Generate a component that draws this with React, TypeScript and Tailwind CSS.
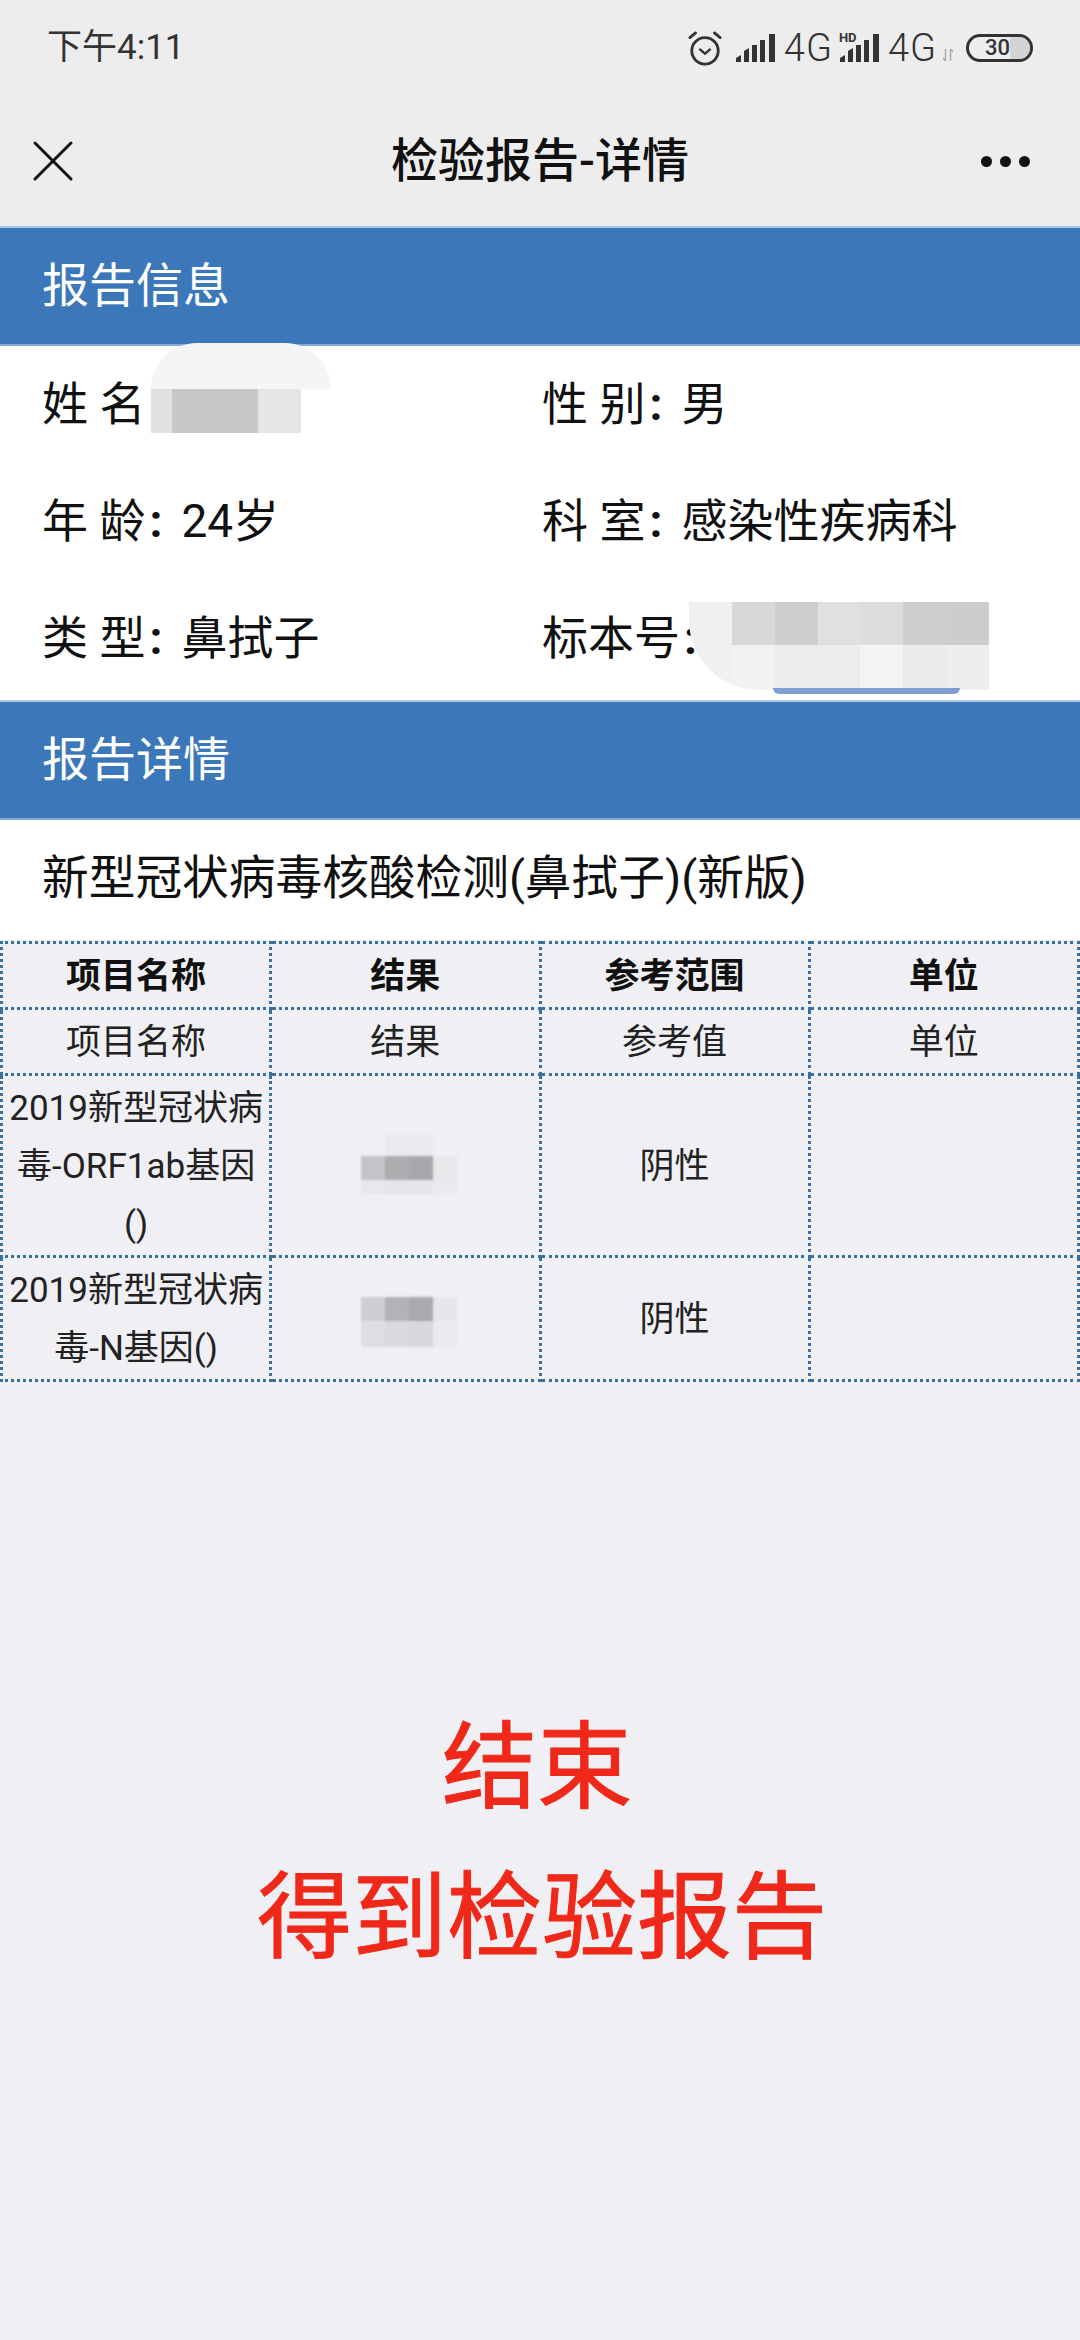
import { X } from 'lucide-react';

const SignalBars = () => (
  <svg width="40" height="28" viewBox="0 0 40 28" fill="#333">
    <path d="M0 28v-4l5-3v7zM8 28V17l5-3v14zM16 28V11h5v17zM24 28V6h5v22zM33 28V0h6v28z" />
  </svg>
);

const Alarm = () => (
  <svg width="34" height="36" viewBox="0 0 36 38" fill="none" stroke="#333" strokeWidth="3">
    <circle cx="18" cy="22" r="14" />
    <path d="M12 20l6 5 6-5" strokeWidth="2.5" />
    <path d="M2 8l6-5M34 8l-6-5" strokeLinecap="round" />
  </svg>
);

const Mosaic = ({ cols, rows, colors }: { cols: string; rows: string; colors: string[] }) => (
  <div className="grid" style={{ gridTemplateColumns: cols, gridTemplateRows: rows }}>
    {colors.map((c, i) => (
      <div key={i} style={{ backgroundColor: c }} />
    ))}
  </div>
);

const SectionBar = ({ title }: { title: string }) => (
  <div className="h-[120px] bg-[#3c78b9] border-t-2 border-b-2 border-t-[#a9c6e2] border-b-[#85abd4] flex items-center pl-[42px] text-[47px] text-white">
    {title}
  </div>
);

const Info = ({ label, value }: { label: string; value?: string }) => (
  <span>
    {label}
    <span className="ml-[4px] mr-[19px] font-bold">:</span>
    {value}
  </span>
);

const cell = 'border-[3px] border-dotted border-[#3a6f9f] text-center align-middle text-[35px] leading-[58px] px-1 pt-[4px] pb-[1px] text-[#222]';
const headCell = 'border-[3px] border-dotted border-[#3a6f9f] text-center align-middle text-[35px] leading-[58px] px-1 pt-[4px] pb-[1px] font-bold text-[#111]';

export default function App() {
  return (
    <div className="min-h-[2340px] bg-[#efeff4] font-['Roboto','Noto_Sans_CJK_SC',sans-serif]">
      <div className="h-[226px] bg-[#ededed]">
        <div className="h-[96px] flex items-center justify-between pl-[47px] pr-[47px]">
          <span className="text-[35px] text-[#333]">下午4:11</span>
          <div className="flex items-center text-[#333]">
            <Alarm />
            <div className="ml-[14px]"><SignalBars /></div>
            <span className="ml-[8px] text-[38px] tracking-[1px] font-light leading-none">4G</span>
            <div className="relative ml-[7px]">
              <SignalBars />
              <span className="absolute -top-[3px] -left-[1px] text-[13px] font-bold leading-none">HD</span>
            </div>
            <span className="ml-[8px] text-[38px] tracking-[1px] font-light leading-none">4G</span>
            <svg className="ml-[5px] mt-[14px]" width="12" height="12" viewBox="0 0 12 12" fill="none" stroke="#aaa" strokeWidth="1.5">
              <path d="M3.5 0v12M1 9l2.5 3M8.5 12V0M11 3L8.5 0" />
            </svg>
            <div className="relative ml-[12px] w-[67px] h-[28px] rounded-full border-[3px] border-[#333] flex items-center justify-center overflow-hidden">
              <div className="absolute right-0 top-0 bottom-0 w-[20px] bg-[#d4d4d4]" />
              <span className="relative text-[22px] font-medium leading-none -ml-[4px]">30</span>
            </div>
          </div>
        </div>
        <div className="h-[130px] grid grid-cols-[1fr_auto_1fr] items-center px-[17px]">
          <X size={72} strokeWidth={3} color="#111" absoluteStrokeWidth />
          <span className="text-[47px] font-medium text-[#111]">检验报告-详情</span>
          <div className="flex gap-[8px] justify-self-end mr-[33px]">
            <div className="w-[11px] h-[11px] rounded-full bg-[#111]" />
            <div className="w-[11px] h-[11px] rounded-full bg-[#111]" />
            <div className="w-[11px] h-[11px] rounded-full bg-[#111]" />
          </div>
        </div>
      </div>

      <SectionBar title="报告信息" />

      <div className="relative bg-white h-[354px] pb-[3px] grid grid-cols-[500px_1fr] grid-rows-3 items-center pl-[42px] text-[46px] text-[#111]">
        <Info label="姓 名" />
        <Info label="性 别" value="男" />
        <Info label="年 龄" value="24岁" />
        <Info label="科 室" value="感染性疾病科" />
        <Info label="类 型" value="鼻拭子" />
        <Info label="标本号" />

        <div className="absolute left-[151px] top-[-3px] w-[180px] h-[46px] bg-[#f4f5f6] rounded-t-[60px]" />
        <div className="absolute left-[151px] top-[43px] w-[150px] h-[44px]">
          <Mosaic cols="21px 86px 43px" rows="44px" colors={['#e2e2e2', '#c8c8c8', '#e5e5e5']} />
        </div>
        <div className="absolute left-[689px] top-[256px] w-[300px] h-[88px] rounded-bl-[70px] overflow-hidden">
          <Mosaic
            cols="repeat(7, 1fr)"
            rows="43px 45px"
            colors={['#f0f0f0', '#d8d8d8', '#cfcfcf', '#e0e0e0', '#dcdcdc', '#cfcfcf', '#cdcdcd', '#f0f0f0', '#f2f2f2', '#ececec', '#ececec', '#f4f4f4', '#ebebeb', '#eeeeee']}
          />
        </div>
        <div className="absolute left-[773px] top-[342px] w-[187px] h-[6px] bg-[#7f9fd0] rounded-b-[6px]" />
      </div>

      <SectionBar title="报告详情" />

      <div className="h-[120px] pb-[3px] bg-white flex items-center pl-[42px] text-[46.7px] text-[#111]">
        新型冠状病毒核酸检测(鼻拭子)(新版)
      </div>

      <table className="w-full table-fixed border-collapse mt-[1px]">
        <tbody>
          <tr>
            <td className={headCell}>项目名称</td>
            <td className={headCell}>结果</td>
            <td className={headCell}>参考范围</td>
            <td className={headCell}>单位</td>
          </tr>
          <tr>
            <td className={cell}>项目名称</td>
            <td className={cell}>结果</td>
            <td className={cell}>参考值</td>
            <td className={cell}>单位</td>
          </tr>
          <tr>
            <td className={cell}>2019新型冠状病毒-ORF1ab基因()</td>
            <td className={cell}>
              <div className="w-[96px] ml-[85px] -mt-[6px] blur-[1px]">
                <Mosaic
                  cols="repeat(4, 24px)"
                  rows="22px 24px 14px"
                  colors={['#efeff4', '#e9e9ee', '#e9e9ee', '#efeff4', '#c4c4c8', '#adadb0', '#a8a8ac', '#e8e8ea', '#e8e8ec', '#e6e6ea', '#e6e6ea', '#eaeaee']}
                />
              </div>
            </td>
            <td className={cell}>阴性</td>
            <td className={cell}></td>
          </tr>
          <tr>
            <td className={cell}>2019新型冠状病毒-N基因()</td>
            <td className={cell}>
              <div className="w-[96px] ml-[85px] mt-[4px] blur-[1px]">
                <Mosaic
                  cols="repeat(4, 24px)"
                  rows="24px 26px"
                  colors={['#cfcfd3', '#b3b3b7', '#aaaaae', '#e6e6ea', '#dedee2', '#dadade', '#d8d8dc', '#eaeaee']}
                />
              </div>
            </td>
            <td className={cell}>阴性</td>
            <td className={cell}></td>
          </tr>
        </tbody>
      </table>

      <div className="mt-[312px] pl-[4px] text-center text-[95px] leading-[150px] text-[#f02819] [-webkit-text-stroke:1px_#f02819]">
        <div className="-ml-[10px]">结束</div>
        <div>得到检验报告</div>
      </div>
    </div>
  );
}
